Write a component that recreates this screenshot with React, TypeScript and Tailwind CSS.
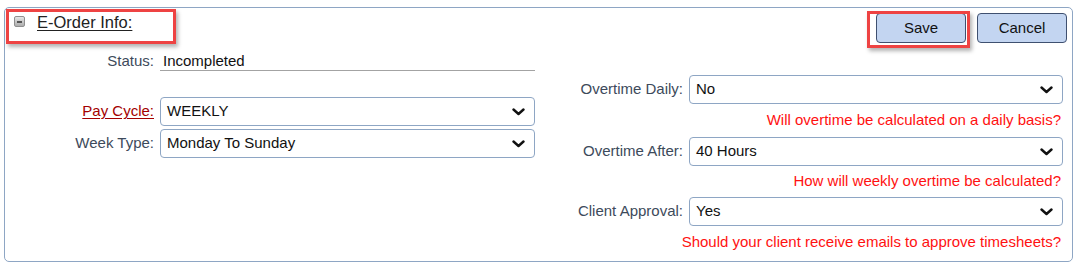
import React from 'react';

/**
 * E-Order Info panel
 *
 * Collapsible order settings with pay cycle and overtime options.
 */

function Chevron() {
  return (
    <svg width="13" height="8" viewBox="0 0 13 8" className="shrink-0">
      <polyline points="1.5,1.5 6.5,6 11.5,1.5" fill="none" stroke="#111" strokeWidth="2.4" strokeLinecap="round" strokeLinejoin="round" />
    </svg>
  );
}

function FakeSelect({ value, width }: { value: string; width: string }) {
  return (
    <div
      role="combobox"
      className={`${width} h-[29px] flex items-center justify-between pl-[6px] pr-[9px] border border-[#8ea6c4] rounded-[4px] bg-white text-[15px] text-[#111]`}
    >
      <span>{value}</span>
      <Chevron />
    </div>
  );
}

function Hint({ children }: { children: React.ReactNode }) {
  return <div className="flex items-center justify-end pr-[2px] text-[15px] text-[#ff1111]">{children}</div>;
}

export default function App() {
  return (
    <div className="relative w-[1076px] h-[264px] bg-white pt-[7px] pl-[4px] font-['Liberation_Sans',Arial,sans-serif]">
      <div className="w-[1069px] h-[255px] border border-[#8ea6c4] rounded-[5px] bg-white">
        {/* Header */}
        <div className="flex justify-between h-[42px]">
          <div className="flex items-center pl-[9px] pt-[4px] h-[24px] gap-[12px]">
            <div className="-mt-[1px] w-[11px] h-[11px] border border-[#8f8f8f] rounded-[2px] bg-gradient-to-b from-[#e6e6e6] to-[#adadad] flex items-center justify-center">
              <div className="w-[5px] h-[2px] bg-[#555]" />
            </div>
            <span className="text-[16.5px] leading-[20px] text-[#222] underline underline-offset-2">E-Order Info:</span>
          </div>
          <div className="flex gap-[11px] pt-[5px] pr-[5px]">
            <button className="w-[90px] h-[30px] rounded-[4px] border border-[#3f5070] bg-[#c3d5f1] text-[15px] text-[#111]">Save</button>
            <button className="w-[90px] h-[30px] rounded-[4px] border border-[#3f5070] bg-[#c3d5f1] text-[15px] text-[#111]">Cancel</button>
          </div>
        </div>

        {/* Body */}
        <div className="flex justify-between text-[15px]">
          {/* Left column */}
          <div className="flex flex-col pt-[1px]">
            <div className="flex items-center h-[20px]">
              <div className="w-[149px] text-right text-[#3d4a5b]">Status:</div>
              <div className="ml-[6px] w-[375px] h-[20px] border-b border-[#a3a3a3] pl-[3px] leading-[20px] text-[#111]">Incompleted</div>
            </div>
            <div className="flex items-center mt-[26px]">
              <div className="w-[149px] text-right text-[#a30000] underline underline-offset-2">Pay Cycle:</div>
              <div className="ml-[6px]">
                <FakeSelect value="WEEKLY" width="w-[375px]" />
              </div>
            </div>
            <div className="flex items-center mt-[3px]">
              <div className="w-[149px] text-right text-[#3d4a5b]">Week Type:</div>
              <div className="ml-[6px]">
                <FakeSelect value="Monday To Sunday" width="w-[375px]" />
              </div>
            </div>
          </div>

          {/* Right column */}
          <div className="flex flex-col pt-[25px] pr-[9px]">
            <div className="flex items-center">
              <div className="w-[123px] text-right text-[#3d4a5b]">Overtime Daily:</div>
              <div className="ml-[6px]">
                <FakeSelect value="No" width="w-[374px]" />
              </div>
            </div>
            <div className="h-[33px] flex justify-end">
              <Hint>Will overtime be calculated on a daily basis?</Hint>
            </div>
            <div className="flex items-center">
              <div className="w-[123px] text-right text-[#3d4a5b]">Overtime After:</div>
              <div className="ml-[6px]">
                <FakeSelect value="40 Hours" width="w-[374px]" />
              </div>
            </div>
            <div className="h-[31px] flex justify-end">
              <Hint>How will weekly overtime be calculated?</Hint>
            </div>
            <div className="flex items-center">
              <div className="w-[123px] text-right text-[#3d4a5b]">Client Approval:</div>
              <div className="ml-[6px]">
                <FakeSelect value="Yes" width="w-[374px]" />
              </div>
            </div>
            <div className="h-[33px] flex justify-end">
              <Hint>Should your client receive emails to approve timesheets?</Hint>
            </div>
          </div>
        </div>
      </div>

      {/* Annotation highlights */}
      <div className="absolute left-[6px] top-[9px] w-[170px] h-[35px] border-[3px] border-[#ee4343] shadow-[2px_3px_4px_rgba(0,0,0,0.3)]" />
      <div className="absolute left-[867px] top-[11px] w-[103px] h-[37px] border-[3px] border-[#ee4343] shadow-[2px_3px_4px_rgba(0,0,0,0.3)]" />
    </div>
  );
}
